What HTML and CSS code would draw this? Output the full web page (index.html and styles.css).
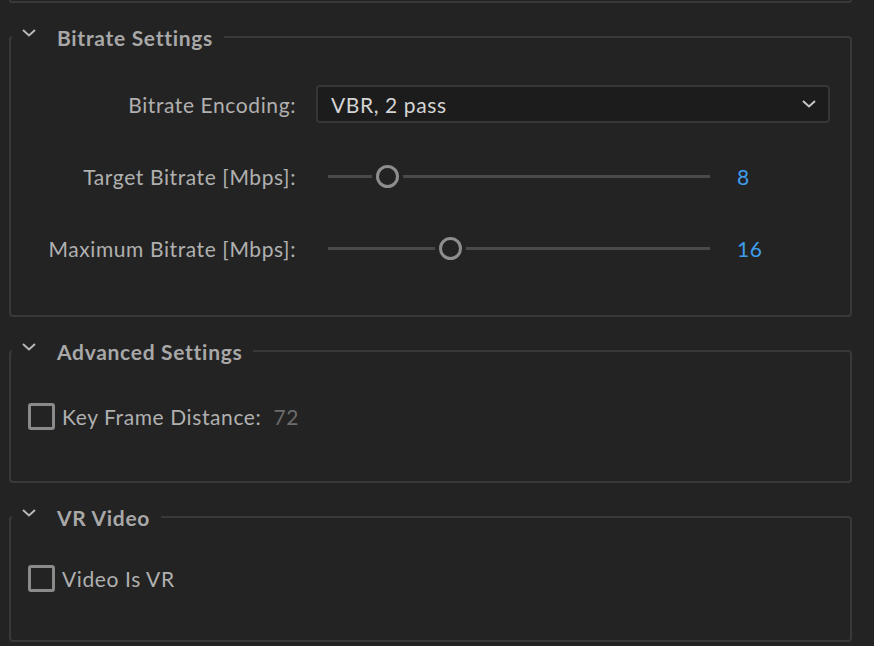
FILE: index.html
```html
<!DOCTYPE html>
<html>
<head>
    <title>Export Settings - Video</title>
    <meta http-equiv="Content-Type" content="text/html; charset=utf-8" />
    <link rel="stylesheet" href="styles.css">
</head>
<body>
<div class="panel">
    <div class="prev-box"></div>

    <!-- Bitrate -->
    <fieldset class="group">
        <legend class="group-title">
            <svg class="chevron" width="14" height="8" viewBox="0 0 14 8"><path d="M1 1 L7 6.5 L13 1" fill="none" stroke="#b8b8b8" stroke-width="2"/></svg>
            <span>Bitrate Settings</span>
        </legend>
        <div class="group-body bitrate-body">
            <div class="field-row">
                <div class="field-label">Bitrate Encoding:</div>
                <div class="select">
                    <span>VBR, 2 pass</span>
                    <svg width="14" height="8" viewBox="0 0 14 8"><path d="M1 1 L7 6.5 L13 1" fill="none" stroke="#c8c8c8" stroke-width="2"/></svg>
                </div>
            </div>
            <div class="field-row">
                <div class="field-label">Target Bitrate [Mbps]:</div>
                <div class="slider">
                    <div class="track">
                        <div class="thumb" style="left: 59px"></div>
                    </div>
                    <div class="slider-value">8</div>
                </div>
            </div>
            <div class="field-row">
                <div class="field-label">Maximum Bitrate [Mbps]:</div>
                <div class="slider">
                    <div class="track">
                        <div class="thumb" style="left: 122px"></div>
                    </div>
                    <div class="slider-value">16</div>
                </div>
            </div>
        </div>
    </fieldset>

    <!-- Advanced -->
    <fieldset class="group">
        <legend class="group-title">
            <svg class="chevron" width="14" height="8" viewBox="0 0 14 8"><path d="M1 1 L7 6.5 L13 1" fill="none" stroke="#b8b8b8" stroke-width="2"/></svg>
            <span>Advanced Settings</span>
        </legend>
        <div class="group-body advanced-body">
            <div class="check-row">
                <div class="checkbox"></div>
                <span class="check-label">Key Frame Distance:</span>
                <span class="check-value">72</span>
            </div>
        </div>
    </fieldset>

    <!-- VR -->
    <fieldset class="group">
        <legend class="group-title">
            <svg class="chevron" width="14" height="8" viewBox="0 0 14 8"><path d="M1 1 L7 6.5 L13 1" fill="none" stroke="#b8b8b8" stroke-width="2"/></svg>
            <span>VR Video</span>
        </legend>
        <div class="group-body vr-body">
            <div class="check-row">
                <div class="checkbox"></div>
                <span class="check-label">Video Is VR</span>
            </div>
        </div>
    </fieldset>
</div>
</body>
</html>
```

FILE: styles.css
```css
html, body {margin: 0; height: 100%; overflow: hidden;}
body{
    background: #232323;
    font-family: 'Lato', 'Open Sans', sans-serif;
    letter-spacing: 0.6px;
    color: #b2b2b2;
}
.panel{
    width: 843px;
    margin-left: 9px;
}
.prev-box{
    height: 1px;
    border: 2px solid #393939;
    border-top: none;
    border-radius: 0 0 4px 4px;
}

.group{
    margin: 20px 0 0 0;
    padding: 0;
    border: 2px solid #393939;
    border-radius: 4px;
    min-width: 0;
}
.group-title{
    display: flex;
    align-items: center;
    margin-left: 1px;
    padding: 0 11px 0 10px;
    height: 28px;
    font-size: 21px;
    font-weight: bold;
    letter-spacing: 0.7px;
    color: #a8a8a8;
}
.chevron{
    margin-top: -8px;
    margin-right: 21px;
}

.bitrate-body{
    padding: 34px 20px 48px 0;
    display: flex;
    flex-direction: column;
    gap: 34px;
}
.field-row{
    display: flex;
    align-items: center;
    height: 38px;
}
.field-label{
    width: 285px;
    text-align: right;
    font-size: 21px;
    color: #b0b0b0;
    flex-shrink: 0;
}
.select{
    display: flex;
    align-items: center;
    justify-content: space-between;
    margin-left: 20px;
    flex: 1;
    height: 34px;
    padding: 0 12px 0 13px;
    background: #1c1c1c;
    border: 2px solid #363636;
    border-radius: 4px;
    font-size: 21px;
    color: #d4d4d4;
}
.slider{
    display: flex;
    align-items: center;
    margin-left: 32px;
}
.track{
    position: relative;
    width: 382px;
    height: 3px;
    background: #4a4a4a;
}
.thumb{
    position: absolute;
    top: -10px;
    width: 17px;
    height: 17px;
    margin-left: -11px;
    border: 3px solid #8e8e8e;
    border-radius: 50%;
    background: #232323;
    box-shadow: 0 0 0 4px #232323;
}
.slider-value{
    margin-left: 27px;
    font-size: 21px;
    color: #3f9ceb;
}

.advanced-body{
    padding: 35px 0 49px 17px;
}
.vr-body{
    padding: 31px 0 46px 17px;
}
.check-row{
    display: flex;
    align-items: center;
    height: 32px;
}
.checkbox{
    width: 21px;
    height: 21px;
    border: 3px solid #8a8a8a;
    border-radius: 3px;
    margin-right: 7px;
}
.check-label{
    font-size: 21px;
    color: #b0b0b0;
}
.check-value{
    margin-left: 12px;
    font-size: 21px;
    color: #6c6c6c;
}
```
